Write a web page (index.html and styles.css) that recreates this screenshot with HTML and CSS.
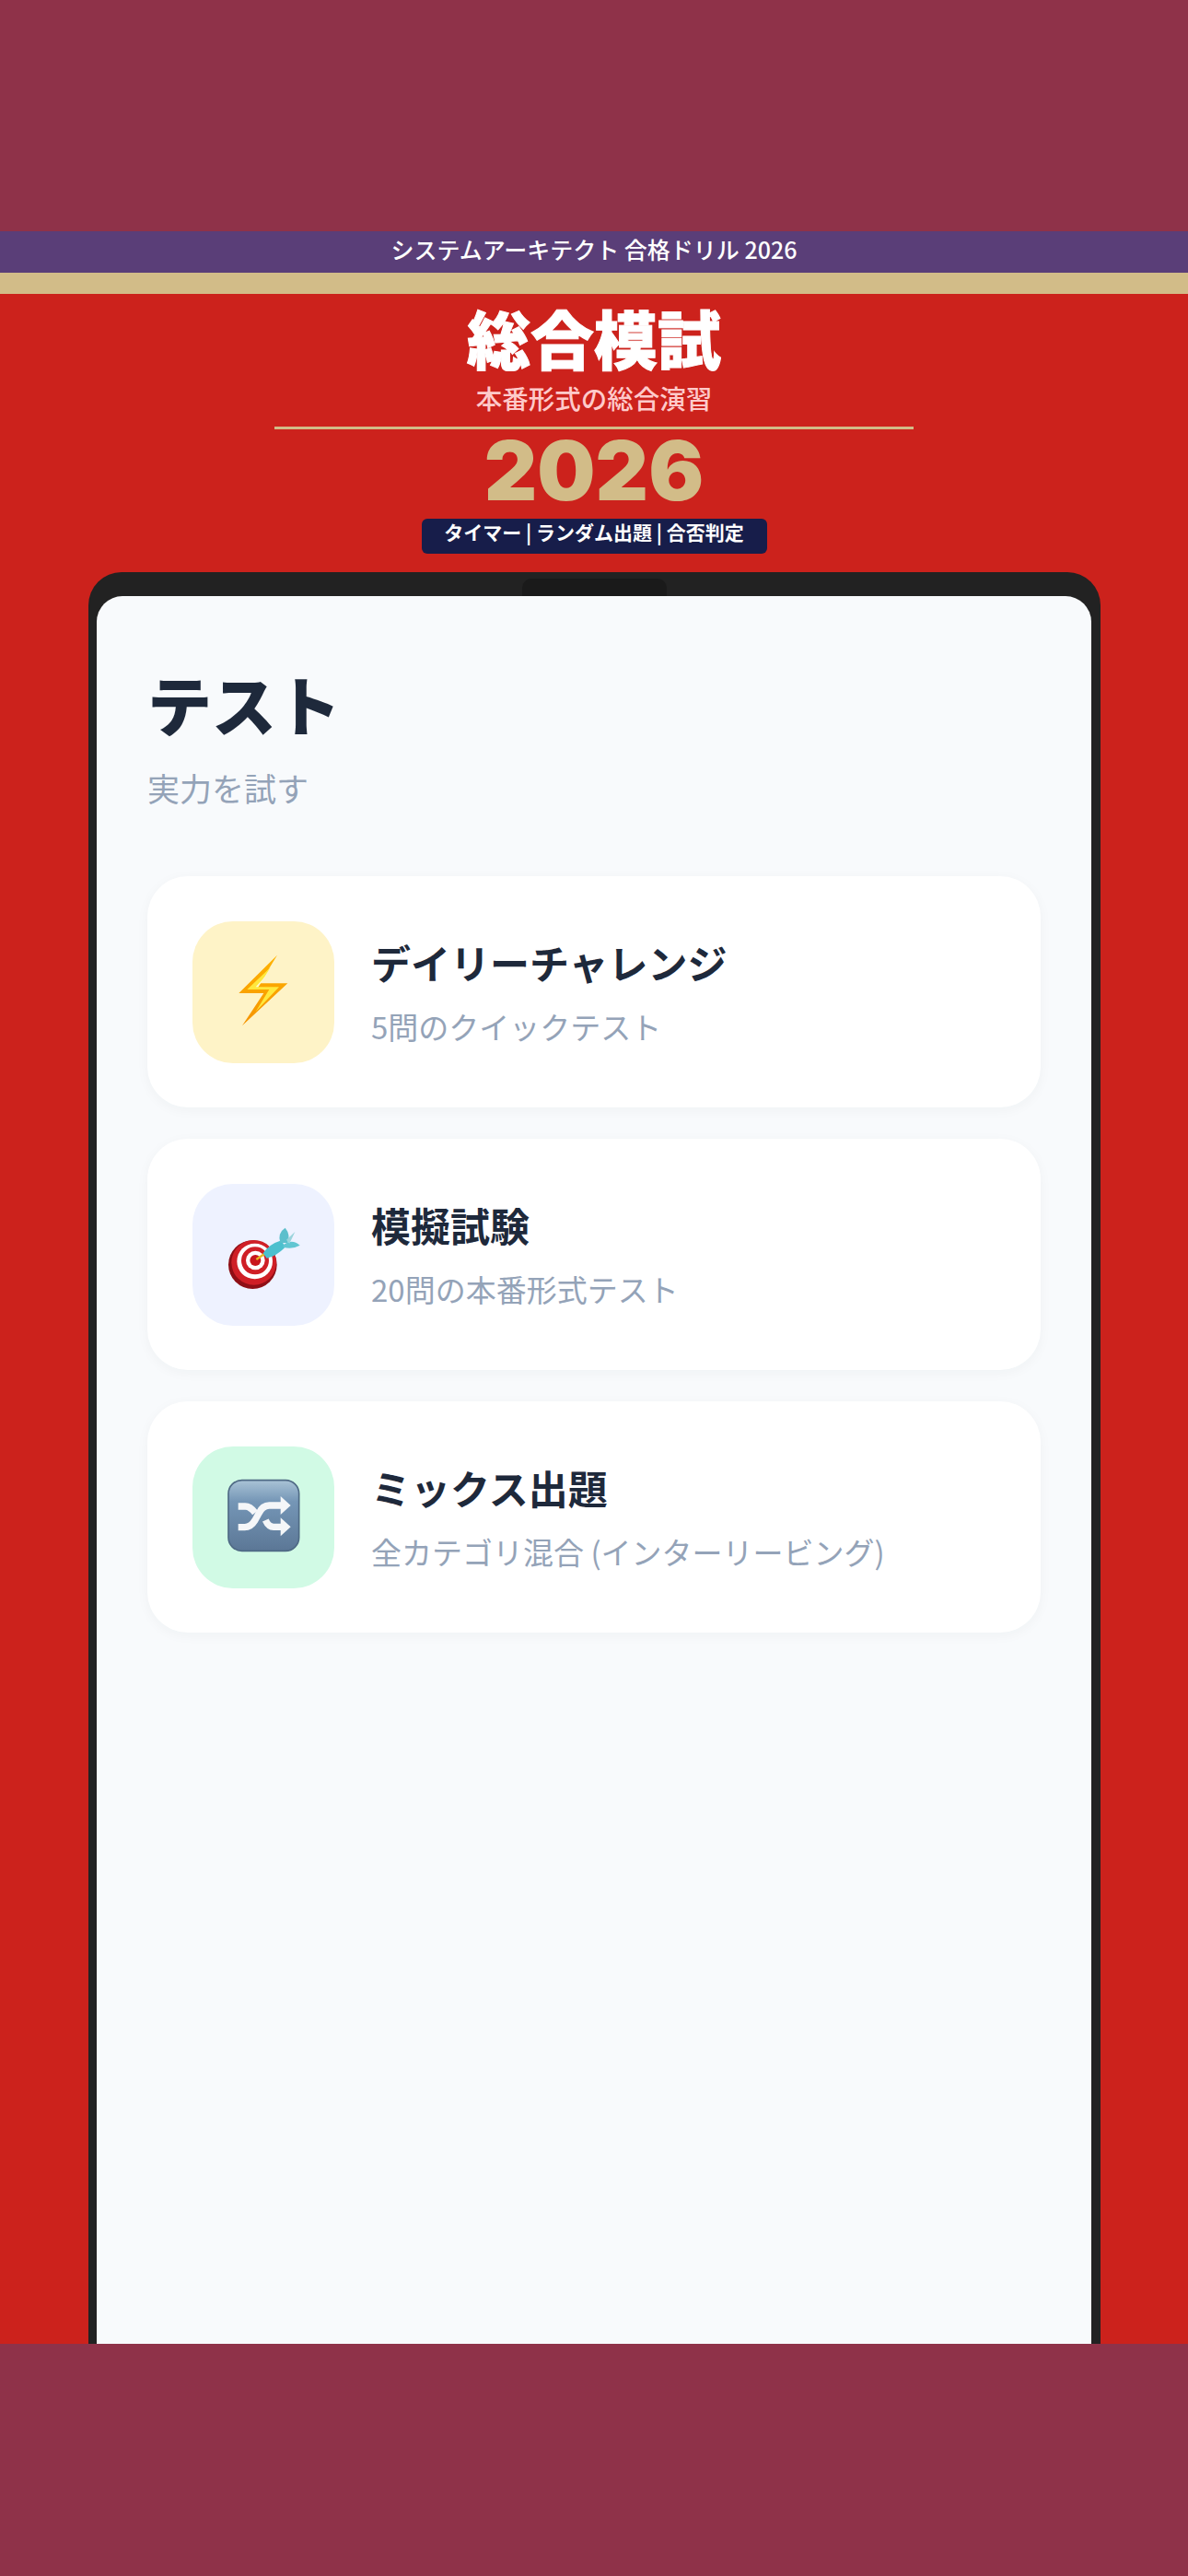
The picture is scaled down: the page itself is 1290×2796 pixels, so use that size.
FILE: index.html
```html
<!DOCTYPE html>
<html lang="ja">
<head>
    <meta charset="UTF-8" />
    <title>テスト</title>
    <link rel="stylesheet" href="styles.css">
</head>
<body>
    <div class="band"></div>
    <main class="poster">
        <div class="topbar">システムアーキテクト 合格ドリル 2026</div>
        <div class="goldbar"></div>
        <header class="hero">
            <h1 class="hero-title">総合模試</h1>
            <p class="hero-sub">本番形式の総合演習</p>
            <div class="hero-line"></div>
            <div class="hero-year">2026</div>
            <div class="hero-badge">タイマー | ランダム出題 | 合否判定</div>
        </header>
        <section class="phone">
            <div class="notch"></div>
            <div class="screen">
                <h2 class="screen-title">テスト</h2>
                <p class="screen-sub">実力を試す</p>
                <ul class="cards">
                    <li class="card">
                        <div class="icon icon-yellow">
                            <svg viewBox="0 0 462 462">
                                <defs>
                                    <linearGradient id="bolt" x1="0" y1="0" x2="0" y2="1">
                                        <stop offset="0" stop-color="#ffb300" />
                                        <stop offset="1" stop-color="#f59300" />
                                    </linearGradient>
                                </defs>
                                <polygon points="276,110 151,234 232,234 162,340 310,202 220,202" fill="url(#bolt)" />
                                <polygon points="254,150 178,222 250,222 206,294 282,214 214,214" fill="#ffe83d" />
                                <polygon points="240,176 206,214 262,212 238,232 262,212 214,214" fill="#fffbd0" />
                            </svg>
                        </div>
                        <div class="card-text">
                            <h3 class="card-title">デイリーチャレンジ</h3>
                            <p class="card-sub">5問のクイックテスト</p>
                        </div>
                    </li>
                    <li class="card">
                        <div class="icon icon-blue">
                            <svg viewBox="0 0 462 462">
                                <circle cx="196" cy="263" r="79" fill="#8e0f16" />
                                <circle cx="200" cy="256" r="73" fill="#cf1f26" />
                                <circle cx="203" cy="252" r="58" fill="#fff" />
                                <circle cx="204" cy="250" r="45" fill="#cf1f26" />
                                <circle cx="205" cy="249" r="31" fill="#fff" />
                                <circle cx="205" cy="249" r="18" fill="#c8161d" />
                                <path d="M208 246 L240 224" stroke="#e8b820" stroke-width="7" />
                                <path d="M230 226 Q250 196 290 184 L302 206 Q272 236 242 242 Z" fill="#4cc0ce" />
                                <path d="M286 192 Q276 160 302 143 Q320 165 310 192 Z" fill="#5cbfcc" />
                                <path d="M296 198 Q325 178 350 200 Q325 214 296 206 Z" fill="#62c6d2" />
                                <path d="M306 182 L334 156 L316 194 Z" fill="#9ad4dc" />
                            </svg>
                        </div>
                        <div class="card-text">
                            <h3 class="card-title">模擬試験</h3>
                            <p class="card-sub">20問の本番形式テスト</p>
                        </div>
                    </li>
                    <li class="card">
                        <div class="icon icon-green">
                            <svg viewBox="0 0 462 462">
                                <defs>
                                    <linearGradient id="tile" x1="0" y1="0" x2="0" y2="1">
                                        <stop offset="0" stop-color="#a9c3d6" />
                                        <stop offset="0.3" stop-color="#7596b6" />
                                        <stop offset="1" stop-color="#5b7796" />
                                    </linearGradient>
                                </defs>
                                <rect x="117" y="110" width="230" height="230" rx="44" fill="url(#tile)" stroke="#4f6a85" stroke-width="5" />
                                <g fill="none" stroke="#f4f6f8" stroke-width="22">
                                    <path d="M149 195 H172 Q188 195 204 216" />
                                    <path d="M149 263 H170 Q190 263 204 240 L216 218 Q228 192 250 192 H292" />
                                    <path d="M238 240 Q248 262 264 262 H292" />
                                </g>
                                <polygon points="287,162 320,192 287,222" fill="#f4f6f8" />
                                <polygon points="287,232 320,262 287,292" fill="#f4f6f8" />
                            </svg>
                        </div>
                        <div class="card-text">
                            <h3 class="card-title">ミックス出題</h3>
                            <p class="card-sub">全カテゴリ混合 (インターリービング)</p>
                        </div>
                    </li>
                </ul>
            </div>
        </section>
    </main>
    <div class="band band-bottom"></div>
</body>
</html>
```

FILE: styles.css
```css
*{
    box-sizing: border-box;
}
html,body{
    margin: 0;
    padding: 0;
}
body{
    width: 1290px;
    height: 2796px;
    display: flex;
    flex-direction: column;
    background: #8f3249;
    font-family: "Noto Sans CJK JP", "Inter", sans-serif;
    overflow: hidden;
}
h1,h2,h3,p,ul{
    margin: 0;
    padding: 0;
}
.band{
    height: 251px;
    flex: none;
}
.band-bottom{
    height: 252px;
}
.poster{
    height: 2293px;
    flex: none;
    background: #cc221c;
    overflow: hidden;
    display: flex;
    flex-direction: column;
}
.topbar{
    height: 45px;
    background: #5a3e78;
    color: #fff;
    font-size: 25px;
    font-weight: 500;
    line-height: 38px;
    text-align: center;
}
.goldbar{
    height: 23px;
    background: #d2bc88;
}
.hero{
    height: 302px;
    display: flex;
    flex-direction: column;
    align-items: center;
}
.hero-title{
    height: 80px;
    margin-top: 7px;
    font-size: 69px;
    font-weight: 900;
    line-height: 80px;
    color: #fff;
    -webkit-text-stroke: 1px #fff;
}
.hero-sub{
    margin-top: 9px;
    font-size: 28.5px;
    font-weight: 500;
    line-height: 34px;
    color: #fecaca;
}
.hero-line{
    width: 694px;
    height: 3px;
    margin-top: 14px;
    background: #d2bc88;
}
.hero-year{
    height: 92px;
    margin-top: -1px;
    font-family: "Inter", sans-serif;
    font-size: 89px;
    font-weight: 900;
    line-height: 92px;
    color: #d2bc88;
}
.hero-badge{
    width: 375px;
    height: 38px;
    margin-top: 6px;
    background: #171d4a;
    border-radius: 6px;
    color: #fff;
    font-size: 21px;
    font-weight: 700;
    line-height: 28px;
    text-align: center;
}
.phone{
    position: relative;
    width: 1099px;
    flex: 1;
    margin-left: 96px;
    padding: 26px 10px 0 9px;
    background: #222;
    border-radius: 36px 36px 0 0;
}
.notch{
    position: absolute;
    top: 7px;
    left: 471px;
    width: 157px;
    height: 19px;
    background: #1a1a1a;
    border-radius: 10px 10px 0 0;
}
.screen{
    height: 100%;
    padding: 72px 55px 0;
    background: #f8fafc;
    border-radius: 28px 28px 0 0;
}
.screen-title{
    font-size: 70px;
    font-weight: 900;
    line-height: 90px;
    color: #1e293b;
}
.screen-sub{
    margin-top: 21px;
    font-size: 35px;
    font-weight: 400;
    line-height: 50px;
    color: #94a3b8;
}
.cards{
    margin-top: 71px;
    display: flex;
    flex-direction: column;
    gap: 34px;
    list-style: none;
}
.card{
    display: flex;
    align-items: center;
    gap: 40px;
    height: 251px;
    padding: 0 49px;
    background: #fff;
    border-radius: 44px;
    box-shadow: 0 3px 14px rgba(30, 41, 59, .04);
}
.icon{
    width: 154px;
    height: 154px;
    flex: none;
    border-radius: 44px;
}
.icon svg{
    display: block;
    width: 100%;
    height: 100%;
}
.icon-yellow{
    background: #fef3c7;
}
.icon-blue{
    background: #eef2ff;
}
.icon-green{
    background: #d1fae5;
}
.card-title{
    font-size: 43px;
    font-weight: 700;
    line-height: 60px;
    color: #1e293b;
}
.card-sub{
    margin-top: 15px;
    font-size: 33px;
    font-weight: 400;
    line-height: 50px;
    color: #94a3b8;
}
```
